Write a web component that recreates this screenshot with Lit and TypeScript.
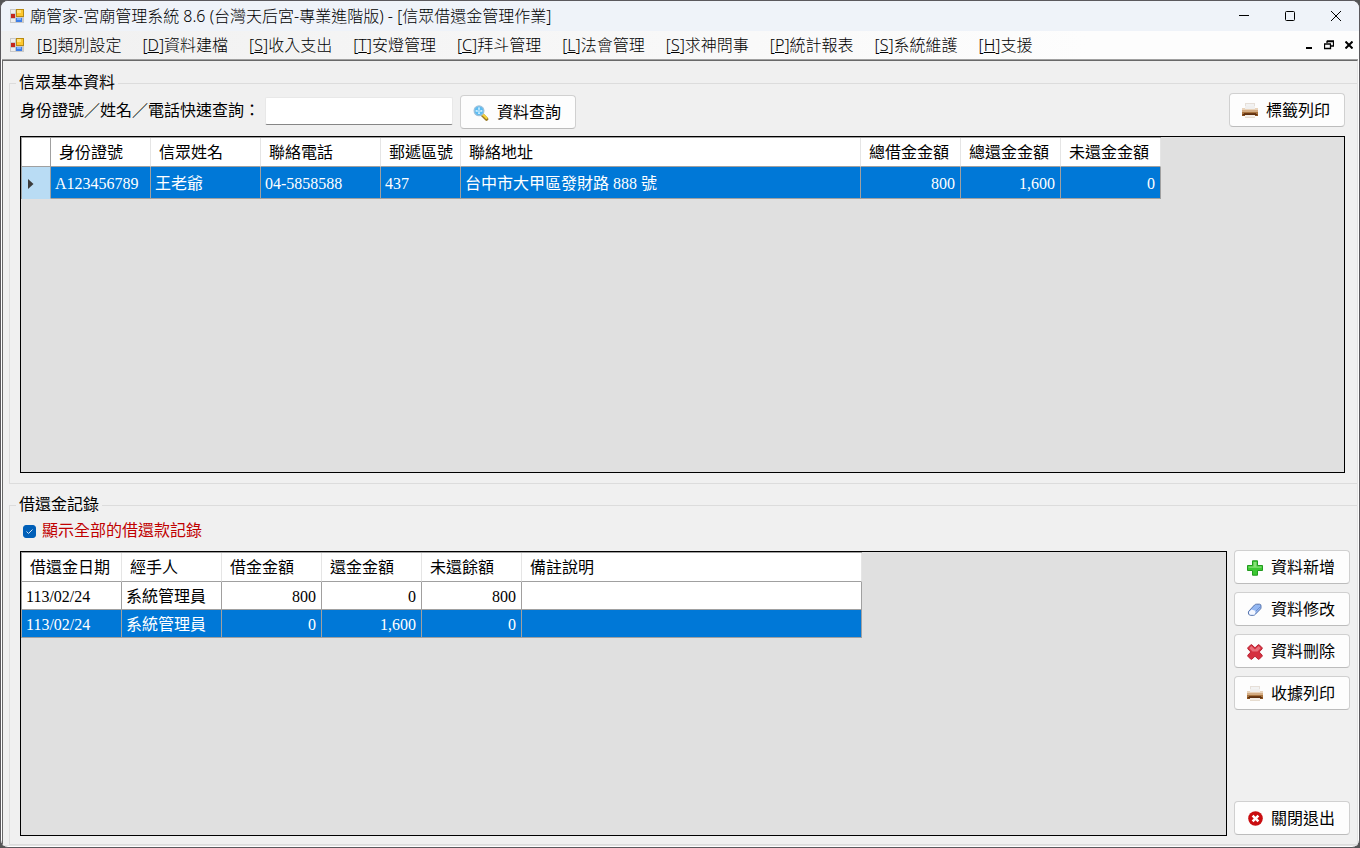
import { LitElement, html, css, svg } from "lit";
import { customElement, state } from "lit/decorators.js";
import { classMap } from "lit/directives/class-map.js";

const icons = {
  app: svg`<svg width="14" height="14" viewBox="0 0 14 14">
    <rect width="14" height="14" fill="#c9c9c9"/>
    <rect x="1" y="1" width="4" height="3" fill="#eee"/><rect x="1" y="10" width="4" height="3" fill="#eee"/>
    <rect x="1" y="5" width="4" height="4" fill="#c4261c"/>
    <rect x="6" y="0" width="8" height="8" fill="#b88a12"/><rect x="7" y="1" width="6" height="6" fill="#fdc72e"/><rect x="7" y="1" width="4" height="3" fill="#ffe27c"/>
    <rect x="6" y="9" width="6" height="4" fill="#3f7fe8"/><rect x="7" y="9" width="4" height="2" fill="#7db0ff"/>
  </svg>`,
  search: svg`<svg width="16" height="16" viewBox="0 0 16 16">
    <path d="M9.500 10l4 4" stroke="#9a7a25" stroke-width="3.600" stroke-linecap="round"/>
    <path d="M10 9.500l3.500 3.500" stroke="#f5d33c" stroke-width="2.200" stroke-linecap="round"/>
    <circle cx="6" cy="5.800" r="4.900" fill="#5cbcf2" stroke="#9dc0da" stroke-width="1.200"/>
    <path d="M6 2.500v6.600M2.700 5.800h6.600" stroke="#d8f2ff" stroke-width="1.800"/>
    <path d="M6 3.500v4.600M3.700 5.800h4.600" stroke="#5cbcf2" stroke-width=".6"/>
  </svg>`,
  print: svg`<svg width="16" height="16" viewBox="0 0 16 16">
    <rect x="3.500" y=".5" width="9" height="6" fill="#f2f2f2" stroke="#e6dfd8"/>
    <rect x="0" y="5" width="16" height="2" fill="#e9d3bb"/>
    <rect x="3" y="3" width="10" height="3" fill="#f0efee"/>
    <rect x="0" y="7" width="16" height="2" fill="#d3ac84"/>
    <rect x="0" y="9" width="16" height="2" fill="#a8733f"/>
    <rect x="2" y="10" width="12" height="1" fill="#6b3a16"/>
    <rect x="0" y="11" width="16" height="2" fill="#8a5220"/>
    <rect x="1" y="11" width="14" height="1" fill="#5f3010"/>
    <rect x="3" y="12" width="10" height="3" fill="#f3ede6"/>
    <rect x="3" y="14" width="10" height="1" fill="#e6dccf"/>
  </svg>`,
  add: svg`<svg width="16" height="16" viewBox="0 0 16 16">
    <path d="M5.500.8h5v4.700h5v5h-5v4.700h-5v-4.700h-5v-5h5z" fill="#3cc832" stroke="#229a1f" stroke-width="1"/>
    <path d="M6.500 2h3v4.500h5v1.300h-13v-1.300h5z" fill="#86e077"/>
  </svg>`,
  edit: svg`<svg width="16" height="16" viewBox="0 0 16 16">
    <path d="M1.500 9.500L7.500 3q.8-.8 2-.8h3q1.800.2 1.500 2v1.500q0 .8-.6 1.400l-5.500 5.600q-.6.600-1.500.600H3.500Q1.300 13 1.400 11z" fill="#93b7f2" stroke="#5673ab"/>
    <path d="M2 10l2.500-2.500 4.500 1.500-1.500 3.800H3.500Q2 12.600 2 11z" fill="#f4f7ff"/>
    <path d="M8.500 9.500l5-5" stroke="#6d8fd0" stroke-width="1"/>
  </svg>`,
  remove: svg`<svg width="16" height="16" viewBox="0 0 16 16">
    <path d="M3.800.8h1L8 3.800l3.200-3h1l3 3v1L12.200 8l3 3.200v1l-3 3h-1L8 12.200l-3.200 3h-1l-3-3v-1L3.800 8l-3-3.200v-1z" fill="#d5303f" stroke="#b92536"/>
    <path d="M4.300 2L8 5.500 11.700 2l2 2.300L10.500 7.500h-5L2.300 4.300z" fill="#e9717c"/>
  </svg>`,
  exit: svg`<svg width="16" height="16" viewBox="0 0 16 16">
    <circle cx="8.500" cy="7.500" r="7.300" fill="#c90d10"/>
    <path d="M5.600 4.600l5.800 5.800M11.400 4.600l-5.800 5.800" stroke="#fff" stroke-width="2.500"/>
  </svg>`,
};

const menuItems: [string, string][] = [
  ["B", "類別設定"], ["D", "資料建檔"], ["S", "收入支出"], ["T", "安燈管理"], ["C", "拜斗管理"],
  ["L", "法會管理"], ["S", "求神問事"], ["P", "統計報表"], ["S", "系統維護"], ["H", "支援"],
];

const memberColumns = ["身份證號", "信眾姓名", "聯絡電話", "郵遞區號", "聯絡地址", "總借金金額", "總還金金額", "未還金金額"];
const members = [["A123456789", "王老爺", "04-5858588", "437", "台中市大甲區發財路 888 號", "800", "1,600", "0"]];

const loanColumns = ["借還金日期", "經手人", "借金金額", "還金金額", "未還餘額", "備註說明"];
const loans = [
  ["113/02/24", "系統管理員", "800", "0", "800", ""],
  ["113/02/24", "系統管理員", "0", "1,600", "0", ""],
];

@customElement("app-root")
export class AppRoot extends LitElement {
  @state() private member = 0;
  @state() private loan = 1;

  static styles = css`
    * { box-sizing: border-box; }
    :host {
      display: block;
      background: #555;
      color: #000;
      font: 400 16px/20px "Liberation Serif", "Noto Sans CJK TC", serif;
    }
    svg { display: block; flex: none; fill: none; }
    button, input { font: inherit; color: inherit; }
    .window {
      min-height: 100vh;
      display: flex;
      flex-direction: column;
      border: 1px solid #5b595d;
      border-radius: 8px;
      overflow: hidden;
      background: #fff;
    }
    .title, .menu {
      display: flex;
      align-items: center;
      padding-left: 9px;
      font-family: "Noto Sans", "Noto Sans CJK TC", sans-serif;
      font-weight: 300;
    }
    .title { height: 30px; gap: 6px; background: #eff3f9; }
    .title h1 { margin: 0; flex: 1; font-size: 16px; font-weight: inherit; line-height: 20px; }
    .menu { height: 28px; background: linear-gradient(90deg, #f0f0f0, #fdfdfd 80%); }
    .items { display: flex; flex: 1; gap: 21px; margin-left: 13px; }
    .items button, .chrome button {
      border: 0;
      padding: 0;
      background: none;
      white-space: nowrap;
    }
    .chrome { display: flex; }
    .chrome button { display: flex; justify-content: center; align-items: center; width: 46px; height: 28px; }
    .chrome.child button { width: 20px; }
    main {
      flex: 1;
      display: flex;
      flex-direction: column;
      gap: 21px;
      margin: 1px;
      padding: 22px 0 0 6px;
      background: #f0f0f0;
      border: 1px solid #e3e3e3;
      border-top-color: #696969;
      border-left-color: #696969;
      box-shadow: 0 -1px #a0a0a0;
    }
    .group {
      display: flex;
      flex-direction: column;
      border: 1px solid #dcdcdc;
      border-right: 0;
    }
    .group h2 {
      align-self: flex-start;
      margin: -11px 0 0 6px;
      padding: 0 3px;
      background: #f0f0f0;
      font-size: 16px;
      font-weight: inherit;
      line-height: 20px;
    }
    .content { flex: 1; display: flex; flex-direction: column; padding: 0 12px 10px 10px; }
    .records { flex: 1; }
    .records .content { padding: 0 7px 8px 10px; }
    .toolbar { display: flex; align-items: center; height: 36px; margin-bottom: 7px; }
    .toolbar label { margin-right: 5px; }
    .toolbar input {
      width: 188px;
      height: 28px;
      margin-right: 7px;
      padding: 2px 4px;
      border: 1px solid #e8e8e8;
      border-bottom-color: #868686;
      border-radius: 2px;
      background: #fff;
    }
    .action {
      display: flex;
      align-items: center;
      gap: 8px;
      width: 116px;
      height: 34px;
      padding: 1px 12px 0;
      border: 1px solid #d0d0d0;
      border-bottom-color: #bcbcbc;
      border-radius: 4px;
      background: #fdfdfd;
      white-space: nowrap;
    }
    .find { align-self: flex-end; }
    .labels { align-self: flex-start; margin-left: auto; }
    .pane { border: 1px solid #000; background: #e0e0e0; overflow: auto; }
    .people .pane { height: 337px; }
    .body { flex: 1; display: grid; grid-template-columns: minmax(0, 1fr) 116px; gap: 7px; }
    .body .pane { margin-top: 1px; }
    .actions { display: flex; flex-direction: column; gap: 8px; }
    .exit { margin-top: auto; margin-bottom: 1px; }
    .all { display: flex; align-items: center; height: 32px; margin-bottom: 3px; gap: 6px; color: #c00000; }
    .all input {
      appearance: none;
      width: 13px;
      height: 13px;
      margin: 0 0 0 3px;
      border-radius: 3px;
      border: 1px solid #868686;
      background: #fff;
    }
    .all input:checked {
      border-color: #005fb8;
      background: #005fb8 url("data:image/svg+xml,%3Csvg xmlns='http://www.w3.org/2000/svg' viewBox='0 0 11 11'%3E%3Cpath d='M2.500 5.500l2 2 4-4' fill='none' stroke='%23cfe3f5'/%3E%3C/svg%3E");
    }
    table {
      border-collapse: separate;
      border-spacing: 0;
      table-layout: fixed;
      width: 1140px;
      border-top: 1px solid #a0a0a0;
      border-left: 1px solid #a0a0a0;
    }
    .loans { width: 841px; }
    th, td {
      padding: 2px 5px 0 4px;
      border: 0 solid #a0a0a0;
      border-width: 0 1px 1px 0;
      font-weight: inherit;
      text-align: left;
      white-space: nowrap;
      overflow: hidden;
    }
    thead th { height: 29px; padding: 2px 0 0 8px; background: #fff; border-right-color: #e5e5e5; }
    thead .corner { border-right-color: #a0a0a0; }
    td { height: 32px; background: #fff; }
    .loans td { height: 28px; }
    .num { text-align: right; }
    .selected td { background: #0078d7; color: #fff; }
    tbody th { background: #b9dcf4; border-color: #b9dcf4; border-right-color: #a0a0a0; padding: 2px 0 0 6px; }
    .c29 { width: 29px; }
    .c80 { width: 80px; }
    .c100 { width: 100px; }
    .c110 { width: 110px; }
    .c120 { width: 120px; }
  `;

  private action(name: keyof typeof icons, text: string, extra = "") {
    return html`<button type="button" class="action ${extra}">${icons[name]}<span>${text}</span></button>`;
  }

  private cells(row: string[], numeric: number[]) {
    return row.map((v, i) => html`<td class=${classMap({ num: numeric.includes(i) })}>${v}</td>`);
  }

  render() {
    return html`
      <div class="window">
        <header class="title">
          ${icons.app}
          <h1>廟管家-宮廟管理系統 8.6 (台灣天后宮-專業進階版) - [信眾借還金管理作業]</h1>
          <div class="chrome">
            <button type="button" aria-label="最小化"><svg width="10" height="10"><path d="M0 4.500h10" stroke="#000"/></svg></button>
            <button type="button" aria-label="最大化"><svg width="10" height="10"><rect x=".5" y=".5" width="9" height="9" rx="1" stroke="#000"/></svg></button>
            <button type="button" aria-label="關閉"><svg width="10" height="10"><path d="M0 0l10 10M10 0L0 10" stroke="#000"/></svg></button>
          </div>
        </header>
        <nav class="menu">
          ${icons.app}
          <div class="items">
            ${menuItems.map(([k, t]) => html`<button type="button">[<u>${k}</u>]${t}</button>`)}
          </div>
          <div class="chrome child">
            <button type="button" aria-label="最小化視窗"><svg width="8" height="10"><path d="M1 8h6" stroke="#000" stroke-width="2"/></svg></button>
            <button type="button" aria-label="還原視窗"><svg width="10" height="10"><path d="M3 3V1.500h6.500V6H7M3 1h7M0 4h7M.5 4v4.500h6V4" stroke="#000" stroke-width="1.300"/></svg></button>
            <button type="button" aria-label="關閉視窗"><svg width="8" height="8"><path d="M.5.5l7 7M7.500.5l-7 7" stroke="#000" stroke-width="2"/></svg></button>
          </div>
        </nav>
        <main>
          <section class="group people" aria-labelledby="people-title">
            <h2 id="people-title">信眾基本資料</h2>
            <div class="content">
              <div class="toolbar">
                <label for="query">身份證號／姓名／電話快速查詢：</label>
                <input id="query" type="text" />
                ${this.action("search", "資料查詢", "find")}
                ${this.action("print", "標籤列印", "labels")}
              </div>
              <div class="pane">
                <table>
                  <colgroup>
                    <col class="c29" /><col class="c100" /><col class="c110" /><col class="c120" /><col class="c80" />
                    <col /><col class="c100" /><col class="c100" /><col class="c100" />
                  </colgroup>
                  <thead><tr><th class="corner"></th>${memberColumns.map((c) => html`<th scope="col">${c}</th>`)}</tr></thead>
                  <tbody>
                    ${members.map((row, i) => html`
                      <tr class=${classMap({ selected: i === this.member })} @click=${() => (this.member = i)}>
                        <th scope="row"><svg width="6" height="10"><path d="M0 0l5.500 5L0 10z" fill="#3b3b3b"/></svg></th>
                        ${this.cells(row, [5, 6, 7])}
                      </tr>`)}
                  </tbody>
                </table>
              </div>
            </div>
          </section>
          <section class="group records" aria-labelledby="records-title">
            <h2 id="records-title">借還金記錄</h2>
            <div class="content">
              <label class="all"><input type="checkbox" checked />顯示全部的借還款記錄</label>
              <div class="body">
                <div class="pane">
                  <table class="loans">
                    <colgroup>
                      <col class="c100" /><col class="c100" /><col class="c100" /><col class="c100" /><col class="c100" /><col />
                    </colgroup>
                    <thead><tr>${loanColumns.map((c) => html`<th scope="col">${c}</th>`)}</tr></thead>
                    <tbody>
                      ${loans.map((row, i) => html`
                        <tr class=${classMap({ selected: i === this.loan })} @click=${() => (this.loan = i)}>
                          ${this.cells(row, [2, 3, 4])}
                        </tr>`)}
                    </tbody>
                  </table>
                </div>
                <div class="actions">
                  ${this.action("add", "資料新增")}
                  ${this.action("edit", "資料修改")}
                  ${this.action("remove", "資料刪除")}
                  ${this.action("print", "收據列印")}
                  ${this.action("exit", "關閉退出", "exit")}
                </div>
              </div>
            </div>
          </section>
        </main>
      </div>
    `;
  }
}
